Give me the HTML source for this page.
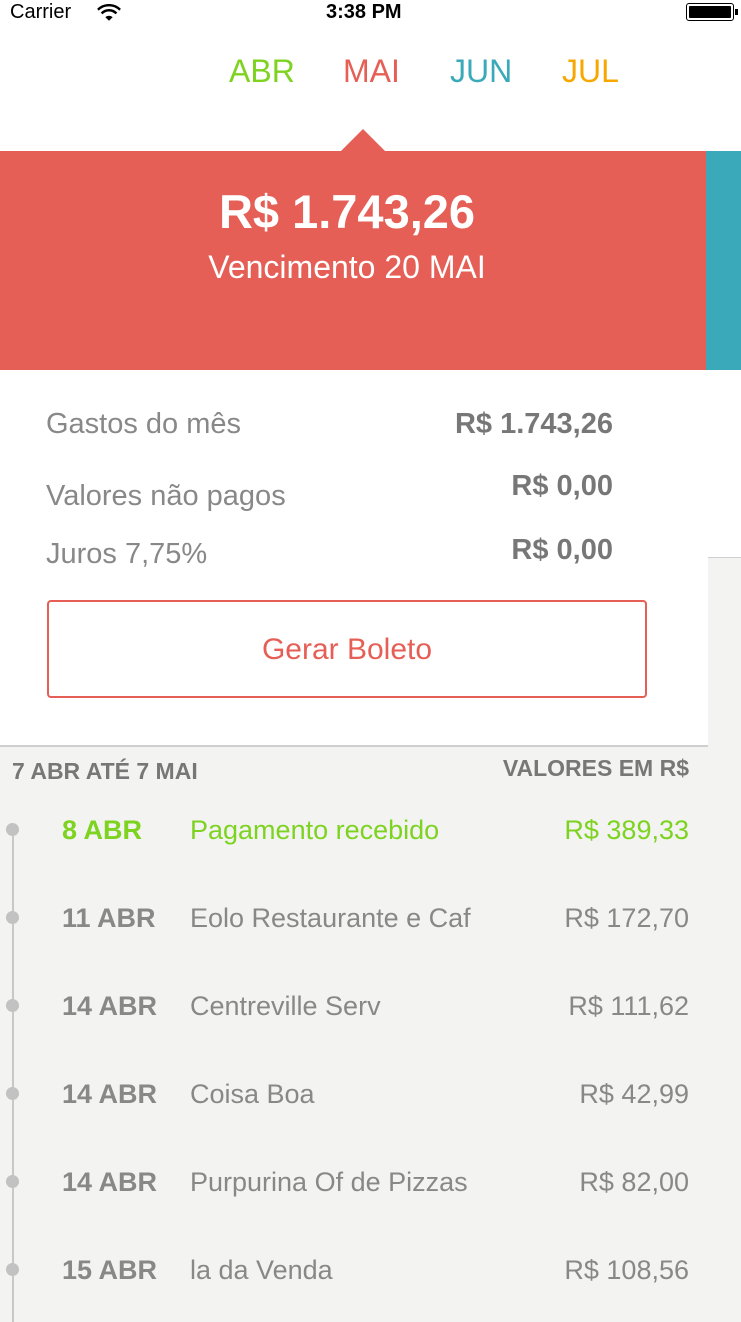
<!DOCTYPE html>
<html><head><meta charset="utf-8"><style>
*{margin:0;padding:0;box-sizing:border-box}
body{width:741px;height:1322px;overflow:hidden;background:#f3f3f2;font-family:"Liberation Sans",sans-serif;position:relative}
.a{position:absolute;white-space:nowrap}
</style></head><body>
<div class="a" style="left:0;top:0;width:741px;height:557px;background:#fff"></div>
<div class="a" style="left:708px;top:557px;width:33px;height:1px;background:#cfcfcf"></div>
<div class="a" style="left:0;top:557px;width:708px;height:188px;background:#fff"></div>
<div class="a" style="left:0;top:745px;width:708px;height:2px;background:#cfcfcf"></div>
<!-- status -->
<div class="a" style="left:10px;top:1px;font-size:20px;color:#000">Carrier</div>
<svg class="a" style="left:97px;top:4px" width="24" height="17" viewBox="0 0 26 18"><path d="M1 6 A17 17 0 0 1 25 6" stroke="#000" stroke-width="2.6" fill="none"/><path d="M5 10 A11 11 0 0 1 21 10" stroke="#000" stroke-width="2.6" fill="none"/><path d="M9 14 L13 18 L17 14 A6 6 0 0 0 9 14Z" fill="#000"/></svg>
<div class="a" style="left:326px;top:1px;font-size:20px;font-weight:bold;color:#000">3:38 PM</div>
<div class="a" style="left:686px;top:3px;width:48px;height:18px;border:1px solid #000;border-radius:3px;padding:2px"><div style="background:#000;width:100%;height:100%;border-radius:1px"></div></div>
<div class="a" style="left:735px;top:9px;width:3px;height:6px;background:#000"></div>
<!-- months -->
<div class="a" style="left:229px;top:53px;font-size:32px;color:#7ed321">ABR</div>
<div class="a" style="left:343px;top:53px;font-size:32px;color:#e65f56">MAI</div>
<div class="a" style="left:450px;top:53px;font-size:32px;color:#3aa9b9">JUN</div>
<div class="a" style="left:562px;top:53px;font-size:32px;color:#f7a800">JUL</div>
<!-- banner -->
<div class="a" style="left:341px;top:129px;width:0;height:0;border-left:22px solid transparent;border-right:22px solid transparent;border-bottom:22px solid #e65f56"></div>
<div class="a" style="left:0;top:151px;width:706px;height:219px;background:#e65f56"></div>
<div class="a" style="left:706px;top:151px;width:35px;height:219px;background:#3aa9b9"></div>
<div class="a" style="left:0;top:184px;width:694px;text-align:center;font-size:47px;font-weight:bold;color:#fff">R$ 1.743,26</div>
<div class="a" style="left:0;top:249px;width:694px;text-align:center;font-size:32px;color:#fff">Vencimento 20 MAI</div>
<!-- details -->
<div class="a" style="left:46px;top:408px;font-size:29px;color:#888">Gastos do mês</div>
<div class="a" style="right:128px;top:408px;font-size:29px;font-weight:bold;color:#777">R$ 1.743,26</div>
<div class="a" style="left:46px;top:480px;font-size:29px;color:#888">Valores não pagos</div>
<div class="a" style="right:128px;top:470px;font-size:29px;font-weight:bold;color:#777">R$ 0,00</div>
<div class="a" style="left:46px;top:538px;font-size:29px;color:#888">Juros 7,75%</div>
<div class="a" style="right:128px;top:534px;font-size:29px;font-weight:bold;color:#777">R$ 0,00</div>
<div class="a" style="left:47px;top:600px;width:600px;height:98px;border:2px solid #e65f56;border-radius:4px;text-align:center;line-height:96px;font-size:30px;color:#e65f56">Gerar Boleto</div>
<!-- list -->
<div class="a" style="left:12px;top:758px;font-size:23px;font-weight:bold;color:#777">7 ABR ATÉ 7 MAI</div>
<div class="a" style="right:52px;top:755px;font-size:23px;font-weight:bold;color:#777">VALORES EM R$</div>
<div class="a" style="left:12px;top:830px;width:2px;height:492px;background:#c8c8c8"></div>
<div class="a" style="left:6px;top:823px;width:13px;height:13px;border-radius:50%;background:#c2c2c2"></div>
<div class="a" style="left:62px;top:815px;font-size:27px;font-weight:bold;color:#7ed321">8 ABR</div>
<div class="a" style="left:190px;top:815px;font-size:27px;color:#7ed321">Pagamento recebido</div>
<div class="a" style="right:52px;top:815px;font-size:27px;color:#7ed321">R$ 389,33</div>

<div class="a" style="left:6px;top:911px;width:13px;height:13px;border-radius:50%;background:#c2c2c2"></div>
<div class="a" style="left:62px;top:903px;font-size:27px;font-weight:bold;color:#888">11 ABR</div>
<div class="a" style="left:190px;top:903px;font-size:27px;color:#888">Eolo Restaurante e Caf</div>
<div class="a" style="right:52px;top:903px;font-size:27px;color:#888">R$ 172,70</div>

<div class="a" style="left:6px;top:999px;width:13px;height:13px;border-radius:50%;background:#c2c2c2"></div>
<div class="a" style="left:62px;top:991px;font-size:27px;font-weight:bold;color:#888">14 ABR</div>
<div class="a" style="left:190px;top:991px;font-size:27px;color:#888">Centreville Serv</div>
<div class="a" style="right:52px;top:991px;font-size:27px;color:#888">R$ 111,62</div>

<div class="a" style="left:6px;top:1087px;width:13px;height:13px;border-radius:50%;background:#c2c2c2"></div>
<div class="a" style="left:62px;top:1079px;font-size:27px;font-weight:bold;color:#888">14 ABR</div>
<div class="a" style="left:190px;top:1079px;font-size:27px;color:#888">Coisa Boa</div>
<div class="a" style="right:52px;top:1079px;font-size:27px;color:#888">R$ 42,99</div>

<div class="a" style="left:6px;top:1175px;width:13px;height:13px;border-radius:50%;background:#c2c2c2"></div>
<div class="a" style="left:62px;top:1167px;font-size:27px;font-weight:bold;color:#888">14 ABR</div>
<div class="a" style="left:190px;top:1167px;font-size:27px;color:#888">Purpurina Of de Pizzas</div>
<div class="a" style="right:52px;top:1167px;font-size:27px;color:#888">R$ 82,00</div>

<div class="a" style="left:6px;top:1263px;width:13px;height:13px;border-radius:50%;background:#c2c2c2"></div>
<div class="a" style="left:62px;top:1255px;font-size:27px;font-weight:bold;color:#888">15 ABR</div>
<div class="a" style="left:190px;top:1255px;font-size:27px;color:#888">la da Venda</div>
<div class="a" style="right:52px;top:1255px;font-size:27px;color:#888">R$ 108,56</div>
</body></html>
